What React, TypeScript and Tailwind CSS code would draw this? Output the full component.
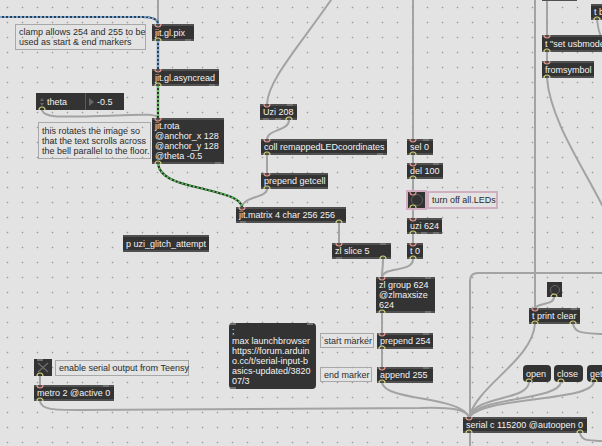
import type { ReactNode } from 'react';

// Max patcher canvas: nodes sit at their patch coordinates, cords drawn in svg

function Obj({ cls, children }: { cls: string; children?: ReactNode }) {
  return (
    <div
      className={`absolute flex flex-col justify-center bg-[#333333] border-y-2 border-[#505050] px-[3px] text-[9px] leading-[10px] text-[#f3f3f3] whitespace-nowrap ${cls}`}
    >
      {children}
    </div>
  );
}

function Msg({ cls, children }: { cls: string; children: ReactNode }) {
  return (
    <div
      className={`absolute flex flex-col justify-center rounded-[4px] bg-[#333333] px-[3px] text-[9px] leading-[10px] text-[#f3f3f3] whitespace-nowrap ${cls}`}
    >
      {children}
    </div>
  );
}

function Comment({ cls, children }: { cls: string; children: ReactNode }) {
  return (
    <div
      className={`absolute flex flex-col justify-center border border-[#a8a8a8] px-[3px] text-[9px] leading-[10px] text-[#2c2c2c] whitespace-nowrap ${cls}`}
    >
      {children}
    </div>
  );
}

const cords = [
  'M158 0 L158 24',
  'M42 110 C44 118 60 117 100 116 C140 115 156 113 158 118',
  'M267 189 C267 198 244 196 242 207',
  'M267 155 L267 173',
  'M289 120 C289 131 268 129 267 139',
  'M331 0 C300 45 268 80 267 104',
  'M339 223 L339 243',
  'M383 259 C383 268 382 270 382 277',
  'M413 259 C413 273 384 266 382 277',
  'M413 0 L413 139',
  'M413 155 L413 163',
  'M413 179 L413 190',
  'M413 210 L413 218',
  'M413 234 L413 243',
  'M535 0 L535 309',
  'M602 273 L478 273 Q470 273 470 281 L470 446',
  'M554 297 C554 306 536 302 535 309',
  'M573 324 C575 334 585 333 602 334',
  'M535 324 C532 360 478 385 469 417',
  'M529 382 C528 401 476 395 469 417',
  'M561 382 C558 401 480 396 469 417',
  'M594 382 C590 402 486 396 469 417',
  'M382 383 C386 401 460 396 469 417',
  'M40 401 C41 410 55 410 80 410 L420 408 C455 407 466 410 469 417',
  'M40 376 L40 385',
  'M382 313 L382 333',
  'M382 349 L382 367',
  'M547 78 C550 120 585 170 602 205',
  'M547 0 L547 35',
  'M547 52 L547 61',
  'M597 20 C598 30 600 35 602 40',
  'M580 433 C582 442 590 440 602 441',
];

const blueCords = ['M0 17 L142 17 C152 17 158 19 158 24', 'M158 41 L158 69'];
const greenCords = [
  'M158 86 L158 118',
  'M158 164 C160 176 172 182 200 188 C228 195 240 198 242 207',
];

const inlets: [number, number][] = [
  [158, 24], [158, 69], [158, 118], [267, 104], [267, 139], [267, 173], [242, 207],
  [339, 243], [382, 277], [382, 333], [382, 367], [413, 139], [413, 163], [413, 192],
  [413, 218], [413, 243], [40, 385], [547, 35], [547, 61], [535, 308], [469, 417],
];

const outlets: [number, number][] = [
  [158, 41], [158, 86], [158, 164], [42, 110], [289, 120], [267, 155], [267, 189],
  [339, 223], [383, 259], [413, 259], [413, 155], [413, 179], [413, 208], [413, 234],
  [382, 313], [382, 349], [382, 383], [40, 376], [40, 401], [554, 297], [535, 324],
  [573, 324], [529, 382], [561, 382], [594, 382], [547, 52], [547, 78], [597, 20],
  [469, 433], [580, 433],
];

// unconnected ports
const bumps: [number, number][] = [
  [188, 39], [212, 84], [218, 162], [290, 104], [266, 118], [278, 118], [380, 153],
  [243, 221], [383, 243], [339, 257], [426, 139], [436, 163], [424, 232], [436, 232],
  [428, 277], [428, 311], [106, 385], [426, 333], [426, 367], [233, 323], [310, 323],
  [233, 387], [40, 359], [574, 308],
];

export default function App() {
  return (
    <div className="relative w-[602px] h-[446px] overflow-hidden bg-[#e3e3e3] bg-[radial-gradient(circle,#9c9c9c_0.7px,transparent_1.1px)] bg-[size:15px_15px] font-['Liberation_Sans',Arial,sans-serif]">
      <svg className="absolute inset-0" width={602} height={446}>
        <g fill="none" strokeLinecap="round">
          {cords.map((d, i) => (
            <path key={i} d={d} stroke="#a3a3a3" strokeWidth={2} />
          ))}
          {blueCords.map((d, i) => (
            <g key={i}>
              <path d={d} stroke="#2e3f52" strokeWidth={2.2} />
              <path d={d} stroke="#78a9da" strokeWidth={2.2} strokeDasharray="2 2" strokeLinecap="butt" />
            </g>
          ))}
          {greenCords.map((d, i) => (
            <g key={i}>
              <path d={d} stroke="#263826" strokeWidth={2.2} />
              <path d={d} stroke="#5fc05f" strokeWidth={2.2} strokeDasharray="2 2" strokeLinecap="butt" />
            </g>
          ))}
        </g>
      </svg>

      {/* comments */}
      <Comment cls="left-[15px] top-[24px] w-[131px] h-[26px]">
        <span>clamp allows 254 and 255 to be</span>
        <span>used as start &amp; end markers</span>
      </Comment>
      <Comment cls="left-[38px] top-[122px] w-[113px] h-[37px]">
        <span>this rotates the image so</span>
        <span>that the text scrolls across</span>
        <span>the bell parallel to the floor.</span>
      </Comment>
      <Comment cls="left-[55px] top-[360px] w-[134px] h-[16px]">enable serial output from Teensy</Comment>
      <Comment cls="left-[320px] top-[333px] w-[54px] h-[15px]">start marker</Comment>
      <Comment cls="left-[320px] top-[367px] w-[52px] h-[15px]">end marker</Comment>
      <div className="absolute left-[427px] top-[191px] w-[71px] h-[18px] border-2 border-[#d2afc0] flex items-center px-[3px] text-[9px] leading-[10px] text-[#2c2c2c] whitespace-nowrap">
        turn off all LEDs
      </div>

      {/* theta attrui */}
      <div className="absolute left-[36px] top-[93px] w-[88px] h-[17px] flex bg-[#5a5a5a] text-[9px] leading-[10px] text-[#f3f3f3]">
        <div className="w-[49px] h-full bg-[#333333] flex items-center">
          <div className="w-[11px] flex flex-col items-center gap-[2px]">
            <span className="w-0 h-0 border-x-[2px] border-x-transparent border-b-[3px] border-b-[#666666]" />
            <span className="w-0 h-0 border-x-[2px] border-x-transparent border-t-[3px] border-t-[#666666]" />
          </div>
          <span>theta</span>
        </div>
        <div className="ml-[1px] flex-1 h-full bg-[#333333] flex items-center gap-[3px] pl-[3px]">
          <span className="w-0 h-0 border-y-[4px] border-y-transparent border-l-[5px] border-l-[#666666]" />
          <span>-0.5</span>
        </div>
      </div>

      {/* jitter chain */}
      <Obj cls="left-[152px] top-[24px] w-[42px] h-[17px]">jit.gl.pix</Obj>
      <Obj cls="left-[152px] top-[69px] w-[67px] h-[17px]">jit.gl.asyncread</Obj>
      <Obj cls="left-[152px] top-[118px] w-[72px] h-[46px]">
        <span>jit.rota</span>
        <span>@anchor_x 128</span>
        <span>@anchor_y 128</span>
        <span>@theta -0.5</span>
      </Obj>
      <Obj cls="left-[260px] top-[104px] w-[37px] h-[16px]">Uzi 208</Obj>
      <Obj cls="left-[261px] top-[139px] w-[126px] h-[16px]">coll remappedLEDcoordinates</Obj>
      <Obj cls="left-[261px] top-[173px] w-[67px] h-[16px]">prepend getcell</Obj>
      <Obj cls="left-[236px] top-[207px] w-[110px] h-[16px]">jit.matrix 4 char 256 256</Obj>
      <Obj cls="left-[123px] top-[235px] w-[86px] h-[17px]">p uzi_glitch_attempt</Obj>
      <Obj cls="left-[332px] top-[243px] w-[59px] h-[16px]">zl slice 5</Obj>

      {/* LED off chain */}
      <Obj cls="left-[407px] top-[139px] w-[26px] h-[16px]">sel 0</Obj>
      <Obj cls="left-[407px] top-[163px] w-[36px] h-[16px]">del 100</Obj>
      <div className="absolute left-[406px] top-[190px] w-[21px] h-[20px] border-2 border-[#d2afc0] bg-[#333333] flex items-center justify-center">
        <span className="w-[12px] h-[12px] rounded-full border-[1.5px] border-[#5c5c5c]" />
      </div>
      <Obj cls="left-[407px] top-[218px] w-[35px] h-[16px]">uzi 624</Obj>
      <Obj cls="left-[407px] top-[243px] w-[16px] h-[16px]">t 0</Obj>
      <Obj cls="left-[376px] top-[277px] w-[59px] h-[36px]">
        <span>zl group 624</span>
        <span>@zlmaxsize</span>
        <span>624</span>
      </Obj>
      <Obj cls="left-[377px] top-[333px] w-[56px] h-[16px]">prepend 254</Obj>
      <Obj cls="left-[377px] top-[367px] w-[56px] h-[16px]">append 255</Obj>

      <Msg cls="left-[229px] top-[323px] w-[87px] h-[66px]">
        <span>;</span>
        <span>max launchbrowser</span>
        <span>https://forum.arduin</span>
        <span>o.cc/t/serial-input-b</span>
        <span>asics-updated/3820</span>
        <span>07/3</span>
      </Msg>

      {/* serial */}
      <div className="absolute left-[34px] top-[359px] w-[18px] h-[17px] bg-[#333333]">
        <svg width={18} height={17} className="block">
          <path d="M4 4 L14 13 M14 4 L4 13" stroke="#6e6e6e" strokeWidth={1.3} />
        </svg>
      </div>
      <Obj cls="left-[34px] top-[385px] w-[80px] h-[16px]">metro 2 @active 0</Obj>
      <div className="absolute left-[547px] top-[282px] w-[15px] h-[15px] bg-[#333333] flex items-center justify-center">
        <span className="w-[10px] h-[10px] rounded-full border-[1.5px] border-[#666666]" />
      </div>
      <Obj cls="left-[529px] top-[308px] w-[51px] h-[16px]">t print clear</Obj>
      <Msg cls="left-[523px] top-[365px] w-[28px] h-[17px]">open</Msg>
      <Msg cls="left-[554px] top-[365px] w-[29px] h-[17px]">close</Msg>
      <Msg cls="left-[587px] top-[365px] w-[30px] h-[17px]">get</Msg>
      <Obj cls="left-[463px] top-[417px] w-[124px] h-[16px]">serial c 115200 @autoopen 0</Obj>

      {/* top right */}
      <Obj cls="left-[542px] top-[-15px] w-[35px] h-[16px]" />
      <Obj cls="left-[591px] top-[4px] w-[24px] h-[16px]">t b</Obj>
      <Obj cls="left-[542px] top-[35px] w-[90px] h-[17px]">t "set usbmode"</Obj>
      <Obj cls="left-[542px] top-[61px] w-[52px] h-[17px]">fromsymbol</Obj>

      {/* ports */}
      <svg className="absolute inset-0 pointer-events-none" width={602} height={446}>
        <g fill="none" strokeWidth={1.2}>
          {bumps.map(([x, y], i) => (
            <rect key={i} x={x - 3} y={y} width={6} height={2} fill="#707070" stroke="none" />
          ))}
          {inlets.map(([x, y], i) => (
            <path key={i} d={`M${x - 3} ${y} A3 3 0 0 0 ${x + 3} ${y}`} stroke="#e4958c" />
          ))}
          {outlets.map(([x, y], i) => (
            <path key={i} d={`M${x - 3} ${y} A3 3 0 0 1 ${x + 3} ${y}`} stroke="#d0d07a" />
          ))}
        </g>
      </svg>
    </div>
  );
}
